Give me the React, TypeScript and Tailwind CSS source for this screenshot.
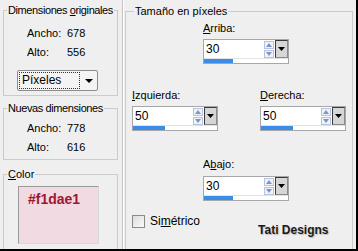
import React from 'react';

const Spin: React.FC<{ value: string; fill: number }> = ({ value, fill }) => (
    <div className="w-[86px] h-[25px] border border-[#a7a7a7] bg-white flex flex-col">
        <div className="flex h-[18px]">
            <div className="flex-1 pl-[2px] leading-[18px] text-[12px]">{value}</div>
            <div className="w-[11px] flex flex-col gap-[1px] pt-[1px] pr-[1px]">
                <div className="h-[8px] border border-[#b5c3e0] bg-[#eef2fa] flex items-center justify-center">
                    <svg width="6" height="4" viewBox="0 0 6 4"><path d="M0 4 L3 0 L6 4 Z" fill="#7f93c6" /></svg>
                </div>
                <div className="h-[8px] border border-[#b5c3e0] bg-[#eef2fa] flex items-center justify-center">
                    <svg width="6" height="4" viewBox="0 0 6 4"><path d="M0 0 L3 4 L6 0 Z" fill="#7f93c6" /></svg>
                </div>
            </div>
            <div className="w-[13px] border-l border-t border-[#3a3a3a] border-r border-r-[#8a8a8a] border-b border-b-[#8a8a8a] bg-[#d6d6d6] flex items-center justify-center">
                <svg width="7" height="4" viewBox="0 0 7 4"><path d="M0 0 L3.5 4 L7 0 Z" fill="#000" /></svg>
            </div>
        </div>
        <div className="flex-1 flex border-t border-[#e2e2e2]">
            <div className="bg-[#3a8de6] h-full" style={{ width: fill }} />
        </div>
    </div>
);

const Field: React.FC<{ label: string; value: string }> = ({ label, value }) => (
    <div className="flex leading-[14px]">
        <span className="w-[40px]">{label}</span>
        <span>{value}</span>
    </div>
);

export default function App() {
    return (
        <div className="w-[358px] h-[251px] bg-[#efefef] border-r-2 border-b-2 border-black flex font-['Liberation_Sans',Arial,sans-serif] text-[11px] text-black overflow-hidden">
            <div className="w-[123px] pl-[3px] pt-[3px] flex flex-col border-r border-[#c4c4c4] shadow-[1px_0_0_white]">
                <fieldset className="w-[115px] h-[93px] border border-[#cbcbcb]">
                    <legend className="ml-[3px] px-[1px] leading-[14px] whitespace-nowrap tracking-[-0.4px]">
                        Dimensiones <span className="underline">o</span>riginales
                    </legend>
                    <div className="pl-[23px] pt-[9px] flex flex-col gap-[5px]">
                        <Field label="Ancho:" value="678" />
                        <Field label="Alto:" value="556" />
                    </div>
                    <div className="ml-[13px] mt-[11px] w-[81px] h-[21px] border border-[#8c8c8c] rounded-[2px] bg-[#f4f4f4] flex items-center pl-[1px]">
                        <div className="w-[61px] h-[17px] border border-dotted border-[#333] pl-[2px] leading-[15px] text-[12px]">Píxeles</div>
                        <div className="flex-1 flex justify-center">
                            <svg width="8" height="4" viewBox="0 0 8 4"><path d="M0 0 L4 4 L8 0 Z" fill="#000" /></svg>
                        </div>
                    </div>
                </fieldset>
                <fieldset className="mt-[5px] w-[115px] h-[59px] border border-[#cbcbcb]">
                    <legend className="ml-[3px] px-[1px] leading-[14px] whitespace-nowrap tracking-[-0.4px]">Nuevas dimensiones</legend>
                    <div className="pl-[23px] pt-[6px] flex flex-col gap-[5px]">
                        <Field label="Ancho:" value="778" />
                        <Field label="Alto:" value="616" />
                    </div>
                </fieldset>
                <fieldset className="mt-[7px] w-[115px] flex-1 border border-b-0 border-[#cbcbcb]">
                    <legend className="ml-[3px] px-[1px] leading-[14px]">
                        <span className="underline">C</span>olor
                    </legend>
                    <div className="ml-[14px] mt-[5px] w-[81px] h-[58px] border border-[#9a9a9a] border-r-[#d8d8d8] border-b-[#d8d8d8] bg-[#f1dae1] pl-[9px] pt-[4px]">
                        <span className="font-bold text-[14px] text-[#a0162f] leading-[16px]">#f1dae1</span>
                    </div>
                </fieldset>
            </div>
            <div className="flex-1 pl-[2px] pt-[4px] pr-[3px]">
                <fieldset className="h-full border border-b-0 border-[#cbcbcb] pl-[6px]">
                    <legend className="ml-[2px] px-[1px] leading-[14px] whitespace-nowrap">Tamaño en píxeles</legend>
                    <div className="ml-[71px] mt-[3px] flex flex-col gap-[4px]">
                        <span className="leading-[14px]"><span className="underline">A</span>rriba:</span>
                        <Spin value="30" fill={29} />
                    </div>
                    <div className="mt-[24px] flex gap-[42px]">
                        <div className="flex flex-col gap-[4px]">
                            <span className="leading-[14px]"><span className="underline">I</span>zquierda:</span>
                            <Spin value="50" fill={32} />
                        </div>
                        <div className="flex flex-col gap-[4px]">
                            <span className="leading-[14px]"><span className="underline">D</span>erecha:</span>
                            <Spin value="50" fill={32} />
                        </div>
                    </div>
                    <div className="ml-[71px] mt-[26px] flex flex-col gap-[5px]">
                        <span className="leading-[14px]">A<span className="underline">b</span>ajo:</span>
                        <Spin value="30" fill={29} />
                    </div>
                    <div className="mt-[14px] flex items-start">
                        <div className="w-[13px] h-[13px] border border-[#8a8a8a] bg-gradient-to-br from-[#dcdcdc] to-[#fafafa]" />
                        <span className="ml-[5px] leading-[13px] text-[12px]">Si<span className="underline">m</span>étrico</span>
                        <span className="ml-[58px] mt-[8px] font-bold text-[12px] text-[#1a1a1a] leading-[14px] [text-shadow:1px_1px_1px_#bdbdbd]">Tati Designs</span>
                    </div>
                </fieldset>
            </div>
        </div>
    );
}
